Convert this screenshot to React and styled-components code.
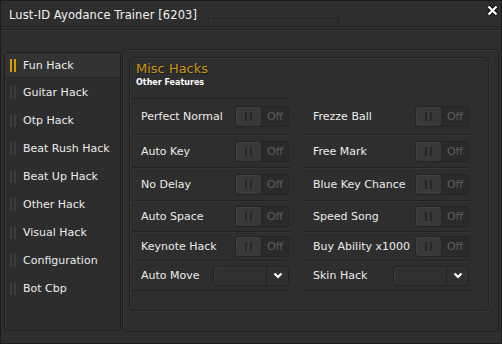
import styled, { createGlobalStyle } from "styled-components";

const GlobalStyle = createGlobalStyle`
  html, body {
    margin: 0;
    padding: 0;
    background: #2b2b2b;
  }
  * {
    box-sizing: border-box;
  }
`;

const Window = styled.div`
  width: 502px;
  height: 344px;
  background: #2e2e2e;
  border: 1px solid #1c1c1c;
  display: flex;
  flex-direction: column;
  font-family: "DejaVu Sans", Verdana, sans-serif;
  color: #e6e6e6;
  position: relative;
  overflow: hidden;
`;

const TitleBar = styled.div`
  height: 26px;
  display: flex;
  align-items: center;
  padding-left: 8px;
  padding-top: 2px;
  border-bottom: 1px solid #232323;
  flex-shrink: 0;
`;

const Title = styled.div`
  font-size: 11.5px;
  color: #f2f2f2;
  letter-spacing: 0.1px;
`;

const TitleTab = styled.div`
  align-self: flex-end;
  margin-left: 11px;
  width: 131px;
  height: 8px;
  border: 1px solid #242424;
  border-bottom: none;
  box-shadow: inset 1px 1px 0 #363636;
`;

const CloseButton = styled.div`
  position: absolute;
  top: 3px;
  right: 3px;
  width: 12px;
  height: 12px;
  display: flex;
  align-items: center;
  justify-content: center;
`;

const Body = styled.div`
  flex: 1;
  margin-top: 2px;
  border-top: 1px solid #222;
  box-shadow: inset 0 1px 0 #383838;
  display: flex;
  padding: 19px 2px 11px 3px;
  gap: 1px;
`;

const Sidebar = styled.div`
  width: 117px;
  margin-top: 3px;
  margin-bottom: 1px;
  border: 1px solid #1f1f1f;
  border-radius: 3px;
  box-shadow: inset 1px 1px 0 #363636;
  background: #2d2d2d;
  display: flex;
  flex-direction: column;
`;

const NavItem = styled.div`
  height: ${(p) => (p.$active ? 25 : 28)}px;
  display: flex;
  align-items: center;
  padding-left: 5px;
  gap: 7px;
  font-size: 11px;
  color: #ececec;
  background: ${(p) => (p.$active ? "#333333" : "transparent")};
  border-bottom: 1px solid ${(p) => (p.$active ? "#252525" : "transparent")};
  padding-top: ${(p) => (p.$active ? 0 : 2)}px;
`;

const Marker = styled.div`
  display: flex;
  gap: 2px;
  height: 13px;

  span {
    width: 2px;
    height: 100%;
    background: ${(p) => (p.$active ? "#d8980a" : "#3c3c3c")};
  }
`;

const Main = styled.div`
  flex: 1;
  border: 1px solid #1f1f1f;
  border-radius: 4px;
  box-shadow: inset 1px 1px 0 #373737;
  padding: 7px 9px 20px 6px;
  display: flex;
`;

const Panel = styled.div`
  flex: 1;
  border: 1px solid #212121;
  border-radius: 5px;
  box-shadow: inset 1px 1px 0 #363636, 1px 1px 0 #363636;
  padding: 3px 0 0 1px;
  display: flex;
  flex-direction: column;
`;

const Header = styled.div`
  padding: 0 0 10px 5px;
  border-bottom: 1px solid #232323;
  margin-right: 197px;
`;

const HeaderTitle = styled.div`
  font-size: 13px;
  color: #c9970f;
  line-height: 16px;
  text-shadow: 1px 1px 0 #1a1a1a;
`;

const HeaderSub = styled.div`
  font-size: 8px;
  font-weight: bold;
  color: #ffffff;
  line-height: 10px;
  margin-top: 1px;
`;

const Grid = styled.div`
  display: grid;
  grid-template-columns: 159px 168px;
  grid-template-rows: 36px 33px 33px 31px 29px 30px;
  column-gap: 12px;
  padding-left: 1px;
`;

const Cell = styled.div`
  display: flex;
  align-items: center;
  padding: 0 2px 0 ${(p) => (p.$right ? 10 : 9)}px;
  border-bottom: 1px solid #232323;
  box-shadow: ${(p) => (p.$first ? "none" : "inset 0 1px 0 #343434")};
`;

const Label = styled.div`
  flex: 1;
  font-size: 11px;
  color: #ececec;
  white-space: nowrap;
`;

const Toggle = styled.div`
  width: 54px;
  height: 21px;
  border: 1px solid #242424;
  border-radius: 3px;
  background: #2a2a2a;
  display: flex;
`;

const Knob = styled.div`
  width: 26px;
  border-radius: 3px;
  background: #393939;
  box-shadow: inset 1px 1px 0 #414141;
  border-right: 1px solid #262626;
  display: flex;
  align-items: center;
  justify-content: center;
  gap: 3px;

  span {
    width: 2px;
    height: 9px;
    background: #272727;
  }
`;

const OffText = styled.div`
  flex: 1;
  display: flex;
  align-items: center;
  justify-content: center;
  font-size: 11px;
  color: #5e5e5e;
`;

const Select = styled.div`
  width: 76px;
  height: 20px;
  border: 1px solid #222;
  border-radius: 3px;
  background: #303030;
  box-shadow: inset 1px 1px 0 #3a3a3a;
  display: flex;
`;

const SelectValue = styled.div`
  flex: 1;
  border-right: 1px solid #232323;
`;

const SelectArrow = styled.div`
  width: 21px;
  display: flex;
  align-items: center;
  justify-content: center;
`;

const navItems = [
  "Fun Hack",
  "Guitar Hack",
  "Otp Hack",
  "Beat Rush Hack",
  "Beat Up Hack",
  "Other Hack",
  "Visual Hack",
  "Configuration",
  "Bot Cbp",
];

const rows = [
  ["Perfect Normal", "Frezze Ball"],
  ["Auto Key", "Free Mark"],
  ["No Delay", "Blue Key Chance"],
  ["Auto Space", "Speed Song"],
  ["Keynote Hack", "Buy Ability x1000"],
  ["Auto Move", "Skin Hack"],
];

const Switch = () => (
  <Toggle>
    <Knob>
      <span />
      <span />
    </Knob>
    <OffText>Off</OffText>
  </Toggle>
);

const Dropdown = () => (
  <Select>
    <SelectValue />
    <SelectArrow>
      <svg width="10" height="7" viewBox="0 0 10 7">
        <path d="M1.5 1.5 L5 5 L8.5 1.5" fill="none" stroke="#fff" strokeWidth="2.2" />
      </svg>
    </SelectArrow>
  </Select>
);

const App = () => {
  return (
    <Window>
      <GlobalStyle />
      <TitleBar>
        <Title>Lust-ID Ayodance Trainer [6203]</Title>
        <TitleTab />
      </TitleBar>
      <CloseButton>
        <svg width="11" height="11" viewBox="0 0 11 11">
          <path d="M1.5 1.5 L9.5 9.5 M9.5 1.5 L1.5 9.5" stroke="#000" strokeWidth="4" />
          <path d="M1.5 1.5 L9.5 9.5 M9.5 1.5 L1.5 9.5" stroke="#fff" strokeWidth="2.4" />
        </svg>
      </CloseButton>
      <Body>
        <Sidebar>
          {navItems.map((item, i) => (
            <NavItem key={item} $active={i === 0}>
              <Marker $active={i === 0}>
                <span />
                <span />
              </Marker>
              {item}
            </NavItem>
          ))}
        </Sidebar>
        <Main>
          <Panel>
            <Header>
              <HeaderTitle>Misc Hacks</HeaderTitle>
              <HeaderSub>Other Features</HeaderSub>
            </Header>
            <Grid>
              {rows.map((pair, r) =>
                pair.map((label, c) => (
                  <Cell key={label} $right={c === 1} $first={r === 0}>
                    <Label>{label}</Label>
                    {r === rows.length - 1 ? <Dropdown /> : <Switch />}
                  </Cell>
                ))
              )}
            </Grid>
          </Panel>
        </Main>
      </Body>
    </Window>
  );
};

export default App;
